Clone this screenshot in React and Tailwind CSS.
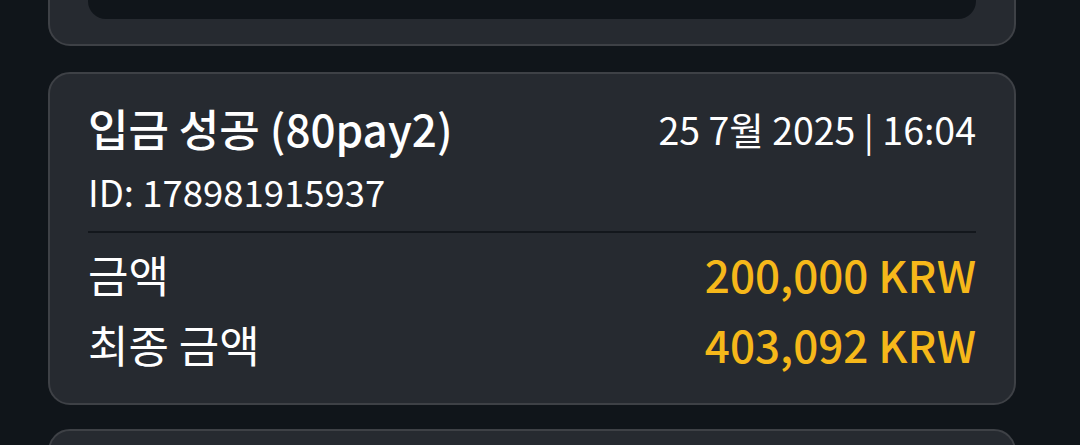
import React from "react";

const font = { fontFamily: '"Noto Sans CJK KR", "Noto Sans", sans-serif' };

const rows = [
  { label: "금액", value: "200,000 KRW" },
  { label: "최종 금액", value: "403,092 KRW" },
];

export default function App() {
  return (
    <div
      className="h-[445px] overflow-hidden bg-[#10151a] pl-[48px] pr-[64px]"
      style={font}
    >
      {/* previous card, mostly scrolled off */}
      <div className="-mt-[154px] flex h-[200px] flex-col justify-end rounded-[22px] border-2 border-[#3e4146] bg-[#262a30] px-[38px] pb-[25px]">
        <div className="h-[120px] rounded-[18px] bg-[#10151a]" />
      </div>

      {/* transaction card */}
      <div className="mt-[26px] rounded-[22px] border-2 border-[#3e4146] bg-[#262a30] px-[38px] pt-[27px] pb-[33px]">
        <div className="flex items-start justify-between">
          <div className="text-[44px] leading-[54px] font-medium text-white">
            입금 성공 (80pay2)
          </div>
          <div className="pt-[1px] text-[37.5px] leading-[54px] text-white">
            25 7월 2025 | 16:04
          </div>
        </div>
        <div className="mt-[12px] text-[36.5px] leading-[48px] text-white">
          ID: 178981915937
        </div>
        <div className="mt-[15px] h-[2px] bg-[#13171c]" />
        <div className="mt-[15px] flex flex-col gap-[18px]">
          {rows.map((r) => (
            <div key={r.label} className="flex items-center justify-between">
              <span className="text-[44px] leading-[52px] text-white">
                {r.label}
              </span>
              <span className="text-[44px] leading-[52px] font-medium text-[#f6b81a]">
                {r.value}
              </span>
            </div>
          ))}
        </div>
      </div>

      {/* next card */}
      <div className="mt-[24px] h-[200px] rounded-[22px] border-2 border-[#3e4146] bg-[#262a30]" />
    </div>
  );
}
